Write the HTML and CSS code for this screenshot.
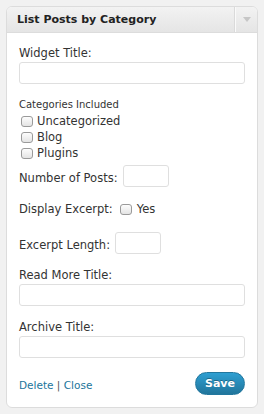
FILE: index.html
```html
<!DOCTYPE HTML>
<html>
    <head>
        <link rel="stylesheet" href="styles.css">
    </head>

    <body>
        <div class="widget">
            <div class="widget-top">
                <h4 class="widget-title">List Posts by Category</h4>
                <div class="widget-action"><span class="arrow"></span></div>
            </div>
            <form class="widget-inside">
                <div class="field">
                    <label class="field-label" for="title">Widget Title:</label>
                    <input class="text wide" type="text" id="title">
                </div>

                <div class="cats">
                    <div class="cats-label">Categories Included</div>
                    <label class="check"><input type="checkbox"> Uncategorized</label>
                    <label class="check"><input type="checkbox"> Blog</label>
                    <label class="check"><input type="checkbox"> Plugins</label>
                </div>

                <div class="row number">
                    <label for="num">Number of Posts:</label>
                    <input class="text small" type="text" id="num">
                </div>

                <div class="row excerpt">
                    <span class="row-label">Display Excerpt:</span>
                    <label class="check inline"><input type="checkbox"> Yes</label>
                </div>

                <div class="row length">
                    <label for="len">Excerpt Length:</label>
                    <input class="text small" type="text" id="len">
                </div>

                <div class="field">
                    <label class="field-label" for="more">Read More Title:</label>
                    <input class="text wide" type="text" id="more">
                </div>

                <div class="field">
                    <label class="field-label" for="archive">Archive Title:</label>
                    <input class="text wide" type="text" id="archive">
                </div>

                <div class="widget-control">
                    <div class="links">
                        <a href="#">Delete</a> <span class="sep">|</span> <a href="#">Close</a>
                    </div>
                    <button type="button" class="save">Save</button>
                </div>
            </form>
        </div>
    </body>
</html>
```

FILE: styles.css
```css
body{
    margin: 0;
    padding: 6px;
    background-color: #f1f1f1;
    font-family: "DejaVu Sans", sans-serif;
    font-size: 11.5px;
    color: #333;
}

.widget{
    background-color: #fff;
    border: 1px solid #dcdcdc;
    border-radius: 6px;
}

.widget-top{
    display: flex;
    height: 25px;
    border-bottom: 1px solid #dcdcdc;
    border-radius: 5px 5px 0 0;
    background: linear-gradient(#f2f2f2, #e5e5e5);
}

.widget-title{
    flex: 1;
    margin: 0;
    padding-left: 10px;
    font-size: 11px;
    font-weight: bold;
    line-height: 25px;
    color: #222;
}

.widget-action{
    width: 22px;
    display: flex;
    justify-content: center;
    align-items: center;
    border-left: 1px solid #dadada;
    box-shadow: inset 1px 0 #fafafa;
}

.arrow{
    width: 0;
    height: 0;
    margin-left: 1px;
    border-left: 4px solid transparent;
    border-right: 4px solid transparent;
    border-top: 5px solid #c6c6c6;
}

.widget-inside{
    padding: 13px 12px 12px;
}

.field-label{
    display: block;
    line-height: 14px;
    margin-bottom: 2px;
}

.field + .field{
    margin-top: 14px;
}

.text{
    box-sizing: border-box;
    height: 22px;
    margin: 0;
    border: 1px solid #dfdfdf;
    border-radius: 3px;
    background: #fff;
    font: inherit;
}

.wide{
    display: block;
    width: 100%;
}

.small{
    width: 46px;
    margin-left: 5px;
}

.cats{
    margin-top: 14px;
}

.cats-label{
    font-size: 10px;
    line-height: 13px;
    margin-bottom: 2px;
}

.check{
    display: flex;
    align-items: center;
    height: 16px;
    line-height: 16px;
}

.check input{
    appearance: none;
    box-sizing: border-box;
    width: 12px;
    height: 11px;
    margin: 1px 4px 0 2px;
    border: 1px solid #9a9a9a;
    border-radius: 3px;
    background: linear-gradient(#fdfdfd, #e4e4e4);
}

.row{
    display: flex;
    align-items: center;
}

.row label, .row-label{
    line-height: 14px;
}

.number{
    margin-top: 4px;
}

.number > label, .length > label{
    margin-top: 3px;
}

.excerpt{
    margin-top: 14px;
    height: 16px;
}

.check.inline input{
    margin-left: 7px;
    margin-right: 5px;
}

.length{
    margin-top: 15px;
}

.length + .field{
    margin-top: 14px;
}

.widget-control{
    display: flex;
    justify-content: space-between;
    align-items: center;
    margin-top: 14px;
}

.links{
    font-size: 10.5px;
    padding-top: 3px;
}

.links a{
    color: #21759b;
    text-decoration: none;
}

.sep{
    color: #555;
}

.save{
    width: 50px;
    height: 23px;
    padding: 0;
    border: 1px solid #22779e;
    border-radius: 12px;
    background: linear-gradient(#2e9fd2, #21759b);
    color: #fff;
    font-family: "DejaVu Sans", sans-serif;
    font-size: 11px;
    font-weight: bold;
    text-shadow: 0 -1px 0 rgba(0,0,0,0.3);
}
```
